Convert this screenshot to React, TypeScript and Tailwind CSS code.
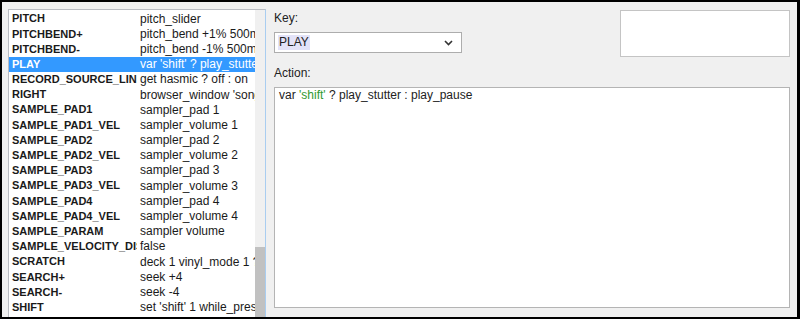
const rows: [string, string][] = [
  ['PITCH', 'pitch_slider'],
  ['PITCHBEND+', 'pitch_bend +1% 500ms'],
  ['PITCHBEND-', 'pitch_bend -1% 500ms'],
  ['PLAY', "var 'shift' ? play_stutter : play_pause"],
  ['RECORD_SOURCE_LINE', 'get hasmic ? off : on'],
  ['RIGHT', "browser_window 'songs' ? browser_scroll +1"],
  ['SAMPLE_PAD1', 'sampler_pad 1'],
  ['SAMPLE_PAD1_VEL', 'sampler_volume 1'],
  ['SAMPLE_PAD2', 'sampler_pad 2'],
  ['SAMPLE_PAD2_VEL', 'sampler_volume 2'],
  ['SAMPLE_PAD3', 'sampler_pad 3'],
  ['SAMPLE_PAD3_VEL', 'sampler_volume 3'],
  ['SAMPLE_PAD4', 'sampler_pad 4'],
  ['SAMPLE_PAD4_VEL', 'sampler_volume 4'],
  ['SAMPLE_PARAM', 'sampler volume'],
  ['SAMPLE_VELOCITY_DISABLE', 'false'],
  ['SCRATCH', 'deck 1 vinyl_mode 1 ? vinyl_mode 0'],
  ['SEARCH+', 'seek +4'],
  ['SEARCH-', 'seek -4'],
  ['SHIFT', "set 'shift' 1 while_pressed"],
  ['SHIFT_CUE_PAD1', 'delete_cue 1'],
];

const font = { fontFamily: '"Liberation Sans", Arial, sans-serif' };

export default function App() {
  return (
    <div className="w-[800px] h-[319px] bg-black pl-[2px] pt-[2px] pr-[3px] pb-[2px]" style={font}>
      <div className="flex h-full bg-[#f0f0f0] overflow-hidden pl-[6px] pt-[7px] pr-[7px]">
        {/* key list */}
        <div className="flex w-[258px] h-[340px] shrink-0 bg-white border border-[#b9bcc2] border-r-[#a9cdf0]">
          <div className="flex-1 pt-[1px] overflow-hidden">
            {rows.map(([key, action]) => {
              const selected = key === 'PLAY';
              return (
                <div
                  key={key}
                  className={`flex h-[15.2px] items-center text-[12px] whitespace-nowrap ${
                    selected ? 'bg-[#3399ff] text-white' : 'text-[#1a1a1a]'
                  }`}
                >
                  <div className="w-[128px] shrink-0 overflow-hidden pl-[3px] font-bold text-[11px]">
                    {key}
                  </div>
                  <div className="flex-1 overflow-hidden pl-[3px]">{action}</div>
                </div>
              );
            })}
          </div>
          <div className="w-[10px] shrink-0 flex flex-col bg-[#f0f0f0]">
            <div className="h-[237px]" />
            <div className="flex-1 bg-[#c1c1c1]" />
          </div>
        </div>

        {/* editor */}
        <div className="flex-1 flex flex-col ml-[8px] pt-[1px] pb-[9px] text-[12px] text-[#222]">
          <div className="flex justify-between">
            <div className="flex flex-col">
              <div className="h-[16px] leading-[16px]">Key:</div>
              <div className="mt-[6px] w-[188px] h-[21px] flex items-center justify-between bg-white border border-[#adadad] pl-[3px] pr-[8px]">
                <span className="bg-[#e3e3f8] px-[1px] leading-[15px]">PLAY</span>
                <svg width="9" height="6" viewBox="0 0 9 6">
                  <polyline points="1,1 4.5,4.5 8,1" fill="none" stroke="#333" strokeWidth="1.6" />
                </svg>
              </div>
            </div>
            <div className="w-[170px] h-[47px] bg-white border border-[#c4c4c4]" />
          </div>
          <div className="mt-[8px] h-[16px] leading-[16px]">Action:</div>
          <div className="mt-[6px] flex-1 bg-white border border-[#b4b4b4] px-[4px] leading-[15px]">
            var <span className="text-[#2f9a2f]">'shift'</span> ? play_stutter : play_pause
          </div>
        </div>
      </div>
    </div>
  );
}
